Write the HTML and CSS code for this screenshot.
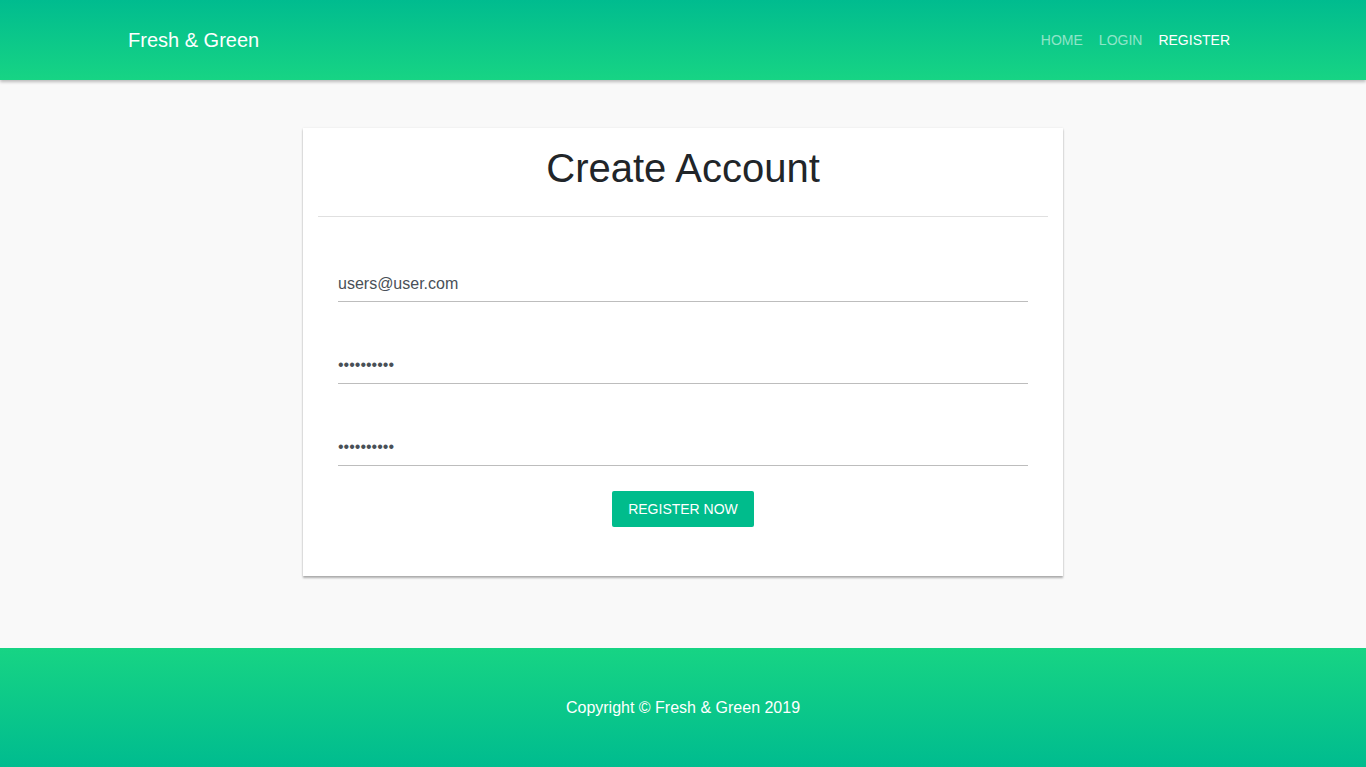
FILE: index.html
```html
<!DOCTYPE html>
<html lang="en">
<head>
<meta charset="utf-8">
<title>Fresh &amp; Green - Register</title>
<link rel="stylesheet" href="styles.css">
</head>
<body>
<header class="navbar">
  <div class="container nav-inner">
    <a class="brand" href="#">Fresh &amp; Green</a>
    <nav class="nav-links">
      <a class="nav-link" href="#">HOME</a>
      <a class="nav-link" href="#">LOGIN</a>
      <a class="nav-link active" href="#">REGISTER</a>
    </nav>
  </div>
</header>
<main class="main">
  <section class="card">
    <h1 class="card-title">Create Account</h1>
    <hr class="divider">
    <form class="form">
      <input class="field field-email" type="email" value="users@user.com">
      <input class="field" type="password" value="1234567890">
      <input class="field" type="password" value="1234567890">
      <div class="actions">
        <button class="btn" type="button">REGISTER NOW</button>
      </div>
    </form>
  </section>
</main>
<footer class="footer">
  <p class="copy">Copyright © Fresh &amp; Green 2019</p>
</footer>
</body>
</html>
```
FILE: styles.css
```css
* { box-sizing: border-box; }
html, body { margin: 0; padding: 0; }
body {
  font-family: "Liberation Sans", Arial, sans-serif;
  background: #f9f9f9;
  color: #212529;
}
.container {
  width: 1140px;
  margin: 0 auto;
  padding: 0 15px;
}
.navbar {
  height: 80px;
  background: linear-gradient(to bottom, #00bc8f, #17d484);
  box-shadow: 0 2px 3px rgba(0,0,0,0.25);
  position: relative;
  z-index: 2;
}
.nav-inner {
  height: 80px;
  display: flex;
  align-items: center;
  justify-content: space-between;
}
.brand {
  color: #fff;
  font-size: 20px;
  text-decoration: none;
}
.nav-links { display: flex; }
.nav-link {
  font-size: 14px;
  color: rgba(255,255,255,0.55);
  text-decoration: none;
  padding: 8px;
}
.nav-link.active { color: #fff; }
.main {
  padding: 48px 0 72px;
}
.card {
  width: 760px;
  height: 448px;
  margin: 0 auto;
  background: #fff;
  box-shadow: 0 2px 2px rgba(0,0,0,0.3), 0 0 2px rgba(0,0,0,0.08);
  padding: 16px 15px 0;
}
.card-title {
  margin: 0;
  font-size: 40px;
  font-weight: 400;
  line-height: 48px;
  text-align: center;
  color: #212529;
}
.divider {
  margin: 24px 0 0;
  border: 0;
  border-top: 1px solid #e0e0e0;
}
.form {
  padding: 48px 20px 0;
  display: flex;
  flex-direction: column;
  gap: 45px;
}
.field {
  display: block;
  width: 100%;
  height: 37px;
  border: 0;
  border-bottom: 1px solid #bdbdbd;
  padding: 0;
  font-family: "Liberation Sans", Arial, sans-serif;
  font-size: 16px;
  color: #495057;
  background: transparent;
  outline: none;
}
.field-email { padding-top: 2px; }
.actions {
  display: flex;
  justify-content: center;
  margin-top: -20px;
}
.btn {
  width: 142px;
  height: 36px;
  border: 0;
  border-radius: 2px;
  background: #00bc8c;
  color: #fff;
  font-family: "Liberation Sans", Arial, sans-serif;
  font-size: 14px;
  cursor: pointer;
}
.footer {
  height: 119px;
  background: linear-gradient(to bottom, #17d484, #00bc8f);
  display: flex;
  align-items: center;
  justify-content: center;
}
.copy {
  margin: 0;
  color: #fff;
  font-size: 16px;
}
```
